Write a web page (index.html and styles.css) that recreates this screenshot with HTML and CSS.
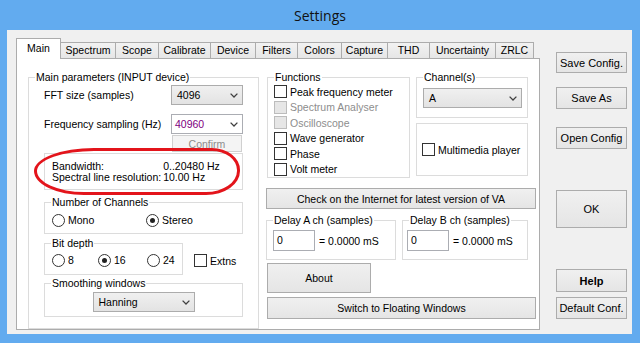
FILE: index.html
```html
<!DOCTYPE html>
<html lang="en">
<head>
  <meta charset="UTF-8">
  <meta name="viewport" content="width=device-width, initial-scale=1.0">
  <title>Settings</title>
  <link rel="stylesheet" href="styles.css">
</head>
<body>
  <div class="window">
    <div class="titlebar">Settings</div>
    <div class="client">
      <div class="tabs-area">
        <div class="tabstrip">
          <div class="tab active">Main</div>
          <div class="tab">Spectrum</div>
          <div class="tab">Scope</div>
          <div class="tab">Calibrate</div>
          <div class="tab">Device</div>
          <div class="tab">Filters</div>
          <div class="tab">Colors</div>
          <div class="tab">Capture</div>
          <div class="tab">THD</div>
          <div class="tab">Uncertainty</div>
          <div class="tab">ZRLC</div>
        </div>
        <div class="panel">
          <fieldset class="group main-params">
            <legend>Main parameters (INPUT device)</legend>
            <div class="main-body">
              <div class="field-row">
                <span>FFT size (samples)</span>
                <div class="combo combo-fft">
                  <span>4096</span>
                  <svg class="chev" width="8" height="5" viewBox="0 0 8 5"><path d="M0.6 0.6 L4 4 L7.4 0.6" fill="none" stroke="#404040" stroke-width="1.3"/></svg>
                </div>
              </div>
              <div class="field-row row-freq">
                <span>Frequency sampling (Hz)</span>
                <div class="combo combo-fft combo-edit">
                  <span class="purple">40960</span>
                  <svg class="chev" width="8" height="5" viewBox="0 0 8 5"><path d="M0.6 0.6 L4 4 L7.4 0.6" fill="none" stroke="#404040" stroke-width="1.3"/></svg>
                </div>
              </div>
              <button class="btn btn-confirm" disabled>Confirm</button>
              <div class="info-box">
                <div class="info-grid">
                  <span>Bandwidth:</span><span>0..20480 Hz</span>
                  <span>Spectral line resolution:</span><span>10.00 Hz</span>
                </div>
                <div class="highlight"></div>
              </div>
              <fieldset class="group channels">
                <legend>Number of Channels</legend>
                <div class="radio-row channels-row">
                  <label class="opt opt-mono"><span class="radio"></span>Mono</label>
                  <label class="opt"><span class="radio checked"></span>Stereo</label>
                </div>
              </fieldset>
              <div class="bit-row">
                <fieldset class="group bits">
                  <legend>Bit depth</legend>
                  <div class="radio-row bits-row">
                    <label class="opt opt-8"><span class="radio"></span>8</label>
                    <label class="opt opt-16"><span class="radio checked"></span>16</label>
                    <label class="opt"><span class="radio"></span>24</label>
                  </div>
                </fieldset>
                <label class="opt extns"><span class="check"></span>Extns</label>
              </div>
              <fieldset class="group smoothing">
                <legend>Smoothing windows</legend>
                <div class="smooth-body">
                  <div class="combo combo-hanning">
                    <span>Hanning</span>
                    <svg class="chev" width="8" height="5" viewBox="0 0 8 5"><path d="M0.6 0.6 L4 4 L7.4 0.6" fill="none" stroke="#404040" stroke-width="1.3"/></svg>
                  </div>
                </div>
              </fieldset>
            </div>
          </fieldset>

          <div class="right-col">
            <div class="top-row">
              <fieldset class="group functions">
                <legend>Functions</legend>
                <label class="opt fn"><span class="check"></span>Peak frequency meter</label>
                <label class="opt fn disabled"><span class="check"></span>Spectrum Analyser</label>
                <label class="opt fn disabled"><span class="check"></span>Oscilloscope</label>
                <label class="opt fn"><span class="check"></span>Wave generator</label>
                <label class="opt fn"><span class="check"></span>Phase</label>
                <label class="opt fn"><span class="check"></span>Volt meter</label>
              </fieldset>
              <div class="channel-col">
                <fieldset class="group channel">
                  <legend>Channel(s)</legend>
                  <div class="channel-body">
                    <div class="combo combo-a">
                      <span>A</span>
                      <svg class="chev" width="8" height="5" viewBox="0 0 8 5"><path d="M0.6 0.6 L4 4 L7.4 0.6" fill="none" stroke="#404040" stroke-width="1.3"/></svg>
                    </div>
                  </div>
                </fieldset>
                <div class="media-box">
                  <label class="opt"><span class="check"></span>Multimedia player</label>
                </div>
              </div>
            </div>
            <button class="btn btn-check">Check on the Internet for latest version of VA</button>
            <div class="delay-row">
              <fieldset class="group delay delay-a">
                <legend>Delay A ch (samples)</legend>
                <div class="delay-body">
                  <div class="textbox">0</div>
                  <span>= 0.0000 mS</span>
                </div>
              </fieldset>
              <fieldset class="group delay delay-b">
                <legend>Delay B ch (samples)</legend>
                <div class="delay-body">
                  <div class="textbox">0</div>
                  <span>= 0.0000 mS</span>
                </div>
              </fieldset>
            </div>
            <button class="btn btn-about">About</button>
            <button class="btn btn-switch">Switch to Floating Windows</button>
          </div>
        </div>
      </div>

      <div class="side-buttons">
        <button class="btn side save-config">Save Config.</button>
        <button class="btn side save-as">Save As</button>
        <button class="btn side open-config">Open Config</button>
        <button class="btn side ok">OK</button>
        <button class="btn side help">Help</button>
        <button class="btn side default-conf">Default Conf.</button>
      </div>
    </div>
  </div>
</body>
</html>
```

FILE: styles.css
```css
* {
  box-sizing: border-box;
}

body {
  margin: 0;
  background-color: #62abef;
  font-family: "Liberation Sans", Arial, sans-serif;
  font-size: 10.5px;
  color: #000;
}

.window {
  height: 343px;
  display: flex;
  flex-direction: column;
}

.titlebar {
  height: 30px;
  line-height: 31px;
  text-align: center;
  font-family: "Open Sans", sans-serif;
  font-size: 14px;
  color: #111;
}

.client {
  margin: 0 8px 9px 7px;
  height: 304px;
  background-color: #f0f0f0;
  display: flex;
}

/* tabs */

.tabs-area {
  margin: 8px 0 0 9px;
  width: 524px;
}

.tabstrip {
  display: grid;
  grid-template-columns: 45px 55px 43px 52px 45px 42px 44px 46px 42px 66px 38px;
  height: 20px;
  align-items: end;
}

.tab {
  height: 16px;
  line-height: 15px;
  text-align: center;
  white-space: nowrap;
  background: linear-gradient(#f2f2f2, #e6e6e6);
  border: 1px solid #acacac;
  border-left: 0;
  border-bottom: 0;
}

.tab.active {
  height: 21px;
  line-height: 19px;
  margin-bottom: -1px;
  background: #fff;
  border-left: 1px solid #acacac;
  position: relative;
  z-index: 1;
}

.panel {
  height: 272px;
  border: 1px solid #acacac;
  background-color: #fff;
  display: flex;
  gap: 7px;
  padding: 12px 0 0 11px;
}

/* group boxes */

.group {
  padding: 0;
  min-width: 0;
  border: 1px solid #dcdcdc;
}

fieldset {
  margin: 0;
}

.group legend {
  margin-left: 6px;
  padding: 0 1px;
  line-height: 13px;
}

.main-params {
  width: 231px;
}

.main-body {
  padding: 1px 15px 6px 15px;
  display: flex;
  flex-direction: column;
}

.field-row {
  height: 20px;
  display: flex;
  align-items: center;
  justify-content: space-between;
}

.row-freq {
  margin-top: 9px;
}

/* combo boxes */

.combo {
  height: 20px;
  display: flex;
  align-items: center;
  justify-content: space-between;
  padding: 0 4px 0 5px;
  background: linear-gradient(#f0f0f0, #e3e3e3);
  border: 1px solid #acacac;
}

.combo-edit {
  background: #fff;
  border-color: #abadb3;
  padding-left: 3px;
}

.purple {
  color: #800080;
}

.combo-fft {
  width: 72px;
}

.combo-hanning {
  width: 102px;
  margin: 0 auto;
}

.combo-a {
  width: 99px;
}

/* buttons */

.btn {
  font-family: inherit;
  font-size: inherit;
  color: #000;
  padding: 0;
  background: linear-gradient(#f0f0f0, #e5e5e5);
  border: 1px solid #acacac;
  white-space: nowrap;
}

.btn-confirm {
  align-self: flex-end;
  width: 70px;
  height: 17px;
  margin: 1px 1px 0 0;
  background: #f4f4f4;
  border-color: #d0d0d0;
  color: #8d8d8d;
}

/* bandwidth box */

.info-box {
  position: relative;
  margin-top: 1px;
  height: 37px;
  border: 1px solid #dcdcdc;
  padding: 7px 0 0 7px;
}

.info-grid {
  display: grid;
  grid-template-columns: auto auto;
  justify-content: start;
  column-gap: 2px;
  line-height: 11px;
}

.highlight {
  position: absolute;
  left: -11px;
  top: -6px;
  width: 206px;
  height: 47px;
  border: 3px solid #e3141b;
  border-radius: 60px 28px 34px 50px / 23px 22px 24px 24px;
}

/* radios and checkboxes */

.opt {
  display: flex;
  align-items: center;
  gap: 3px;
  white-space: nowrap;
}

.radio,
.check {
  width: 13px;
  height: 13px;
  flex: none;
  background: #fff;
  border: 1px solid #333;
}

.radio {
  border-radius: 50%;
  display: flex;
  align-items: center;
  justify-content: center;
}

.radio.checked::after {
  content: "";
  width: 5px;
  height: 5px;
  border-radius: 50%;
  background: #222;
}

.disabled {
  color: #8d8d8d;
}

.disabled .check {
  background: #e6e6e6;
  border-color: #bcbcbc;
}

.radio-row {
  display: flex;
  align-items: center;
  padding-left: 7px;
}

.channels {
  margin-top: 6px;
}

.channels-row {
  height: 22px;
  margin-bottom: 2px;
}

.opt-mono {
  width: 94px;
}

.bit-row {
  display: flex;
  margin-top: 3px;
}

.bits {
  width: 139px;
}

.bits-row {
  height: 20px;
  margin-bottom: 4px;
}

.opt-8 {
  width: 46px;
}

.opt-16 {
  width: 49px;
}

.extns {
  align-self: flex-end;
  margin: 0 0 8px 11px;
}

.smoothing {
  margin-top: 2px;
}

.smooth-body {
  padding: 2px 0 4px;
}

/* right column */

.right-col {
  width: 270px;
  display: flex;
  flex-direction: column;
}

.top-row {
  display: flex;
  gap: 6px;
  margin-left: 1px;
}

.functions {
  width: 143px;
}

.fn {
  height: 15.5px;
  padding-left: 6px;
}

.channel-col {
  width: 112px;
}

.channel-body {
  padding: 4px 5px 9px 6px;
}

.media-box {
  margin-top: 5px;
  height: 53px;
  border: 1px solid #dcdcdc;
  display: flex;
  align-items: center;
  padding-left: 5px;
}

.btn-check {
  margin-top: 10px;
  height: 21px;
  width: 270px;
}

.delay-row {
  display: flex;
  gap: 6px;
  margin-top: 5px;
}

.delay-a {
  width: 130px;
}

.delay-b {
  width: 126px;
}

.delay-body {
  display: flex;
  align-items: center;
  gap: 4px;
  padding: 3px 0 8px 6px;
}

.delay-b .delay-body {
  padding-left: 4px;
}

.textbox {
  width: 42px;
  height: 21px;
  line-height: 19px;
  padding-left: 3px;
  background: #fff;
  border: 1px solid #abadb3;
}

.btn-about {
  margin: 3px 0 0 1px;
  width: 104px;
  height: 30px;
}

.btn-switch {
  margin: 4px 0 0 1px;
  width: 269px;
  height: 22px;
}

/* side buttons */

.side-buttons {
  margin-left: 16px;
  padding-top: 22px;
  display: flex;
  flex-direction: column;
}

.side {
  width: 71px;
  height: 22px;
  font-size: 11px;
}

.save-config {
  height: 21px;
}

.save-as {
  margin-top: 14px;
}

.open-config {
  margin-top: 18px;
}

.ok {
  margin-top: 41px;
  height: 38px;
}

.help {
  margin-top: 41px;
  height: 23px;
  font-weight: bold;
}

.default-conf {
  margin-top: 5px;
}
```
